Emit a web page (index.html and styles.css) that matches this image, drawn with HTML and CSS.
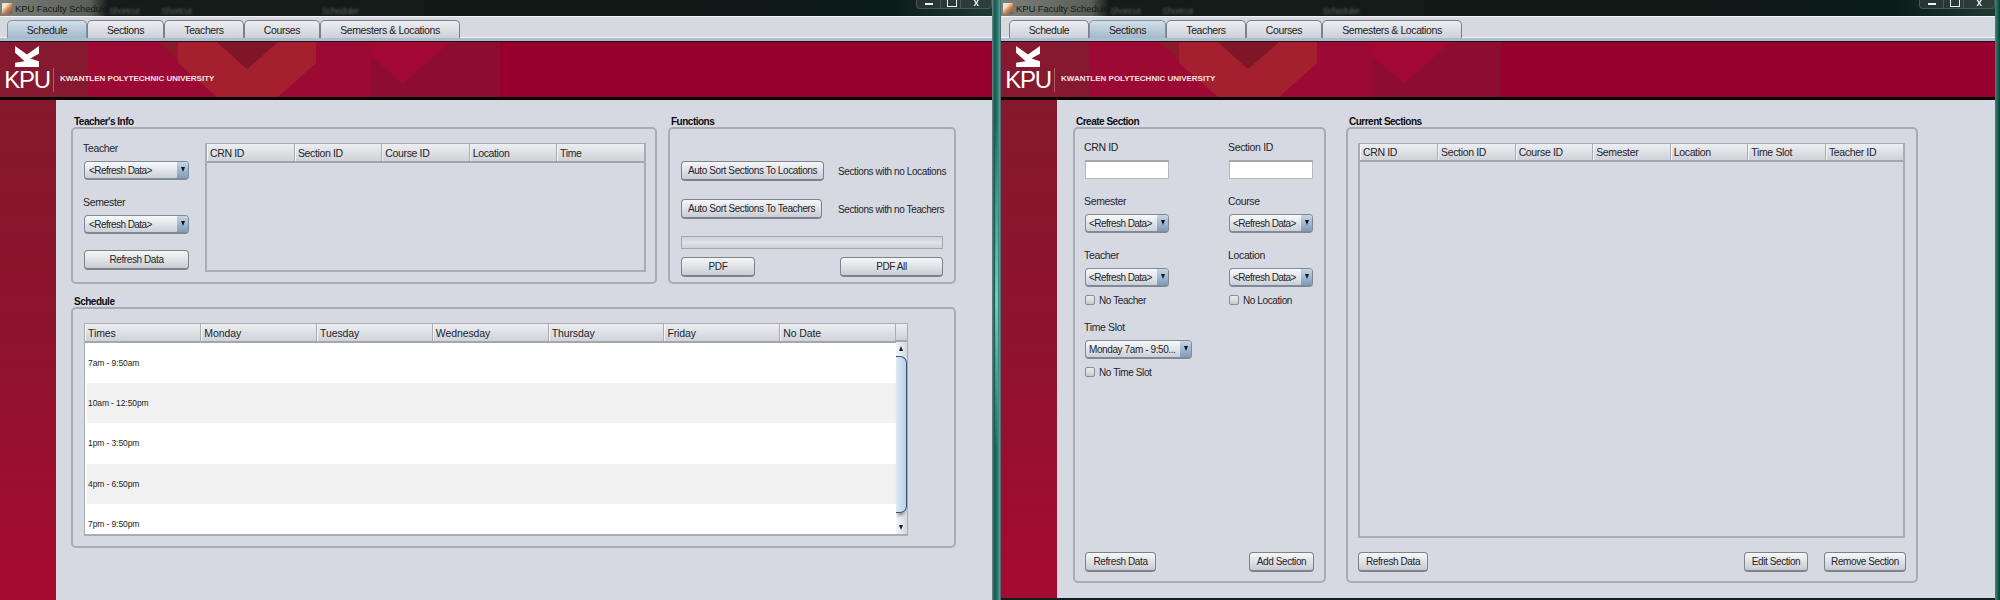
FILE: index.html
```html
<!DOCTYPE html>
<html lang="en">
<head>
    <meta charset="UTF-8">
    <meta name="viewport" content="width=device-width, initial-scale=1.0">
    <title>KPU Faculty Scheduler</title>
    <link rel="stylesheet" href="styles.css">
</head>
<body>
    <svg class="defs" width="0" height="0">
        <symbol id="banner-art" viewBox="0 0 520 55" preserveAspectRatio="xMinYMin meet">
            <rect x="0" y="0" width="88" height="55" fill="#86182f"/>
            <rect x="88" y="0" width="283" height="55" fill="#9c0a33"/>
            <polygon points="158,0 178,0 178,17" fill="#8a1a2c"/>
            <polygon points="178,0 217,0 247,27 278,0 316,0 316,21 278,55 217,55 178,21" fill="#a5202f"/>
            <polygon points="217,0 278,0 247,27" fill="#7f1628"/>
            <rect x="371" y="0" width="129" height="55" fill="#8c0d2e"/>
            <polygon points="371,0 450,0 403,42 371,14" fill="#a30832"/>
        </symbol>
        <symbol id="kpu-bird" viewBox="0 0 26 22">
            <polygon points="0,0 12.5,9 25,0 25,8 16,13 25,16 25,22 0,22 0,17.500 10,16 0,7"/>
        </symbol>
    </svg>

    <div class="desktop">
        <!-- schedule window -->
        <div class="window window-left">
            <div class="titlebar">
                <span class="app-icon"></span>
                <span class="app-title">KPU Faculty Scheduler</span>
                <span class="blur-label label-a">Shortcut</span>
                <span class="blur-label label-b">Shortcut</span>
                <span class="blur-label label-c">Scheduler</span>
                <div class="win-controls">
                    <span class="ctl-min"></span>
                    <span class="ctl-max"></span>
                    <span class="ctl-close">x</span>
                </div>
            </div>
            <div class="tabs">
                <div class="tab tab-w1 active">Schedule</div>
                <div class="tab tab-w2">Sections</div>
                <div class="tab tab-w3">Teachers</div>
                <div class="tab tab-w4">Courses</div>
                <div class="tab tab-w5">Semesters &amp; Locations</div>
            </div>
            <div class="banner">
                <svg class="banner-art"><use href="#banner-art"/></svg>
                <div class="logo">
                    <svg class="bird"><use href="#kpu-bird"/></svg>
                    <span class="logo-kpu">KPU</span>
                </div>
                <span class="logo-sep"></span>
                <span class="logo-name">KWANTLEN POLYTECHNIC UNIVERSITY</span>
            </div>
            <div class="main">
                <div class="sidebar"></div>
                <div class="content schedule-page">
                    <div class="top-row">
                        <section class="group info-group">
                            <h3>Teacher's Info</h3>
                            <div class="box info-box">
                                <div class="info-fields">
                                    <label>Teacher</label>
                                    <div class="combo">&lt;Refresh Data&gt;</div>
                                    <label class="next">Semester</label>
                                    <div class="combo">&lt;Refresh Data&gt;</div>
                                    <button class="btn refresh-wide">Refresh Data</button>
                                </div>
                                <div class="jtable info-table">
                                    <table>
                                        <thead>
                                            <tr><th>CRN ID</th><th>Section ID</th><th>Course ID</th><th>Location</th><th>Time</th></tr>
                                        </thead>
                                    </table>
                                </div>
                            </div>
                        </section>
                        <section class="group func-group">
                            <h3>Functions</h3>
                            <div class="box func-box">
                                <div class="func-row">
                                    <button class="btn sort-loc">Auto Sort Sections To Locations</button>
                                    <span class="func-note">Sections with no Locations</span>
                                </div>
                                <div class="func-row row-two">
                                    <button class="btn sort-tea">Auto Sort Sections To Teachers</button>
                                    <span class="func-note note-two">Sections with no Teachers</span>
                                </div>
                                <div class="progress"></div>
                                <div class="pdf-row">
                                    <button class="btn pdf-one">PDF</button>
                                    <button class="btn pdf-all">PDF All</button>
                                </div>
                            </div>
                        </section>
                    </div>
                    <section class="group sched-group">
                        <h3>Schedule</h3>
                        <div class="box sched-box">
                            <div class="sched-wrap">
                                <table class="sched-table">
                                    <thead>
                                        <tr><th>Times</th><th>Monday</th><th>Tuesday</th><th>Wednesday</th><th>Thursday</th><th>Friday</th><th>No Date</th></tr>
                                    </thead>
                                    <tbody>
                                        <tr><td>7am - 9:50am</td><td></td><td></td><td></td><td></td><td></td><td></td></tr>
                                        <tr class="alt"><td>10am - 12:50pm</td><td></td><td></td><td></td><td></td><td></td><td></td></tr>
                                        <tr><td>1pm - 3:50pm</td><td></td><td></td><td></td><td></td><td></td><td></td></tr>
                                        <tr class="alt"><td>4pm - 6:50pm</td><td></td><td></td><td></td><td></td><td></td><td></td></tr>
                                        <tr><td>7pm - 9:50pm</td><td></td><td></td><td></td><td></td><td></td><td></td></tr>
                                    </tbody>
                                </table>
                                <div class="scroll-col">
                                    <div class="scroll-corner"></div>
                                    <div class="scroll-track">
                                        <span class="arrow-up"></span>
                                        <span class="scroll-thumb"></span>
                                        <span class="arrow-down"></span>
                                    </div>
                                </div>
                            </div>
                        </div>
                    </section>
                </div>
            </div>
        </div>

        <div class="glass"></div>

        <!-- sections window -->
        <div class="window window-right">
            <div class="titlebar">
                <span class="app-icon"></span>
                <span class="app-title">KPU Faculty Scheduler</span>
                <span class="blur-label label-a">Shortcut</span>
                <span class="blur-label label-b">Shortcut</span>
                <span class="blur-label label-c">Scheduler</span>
                <div class="win-controls">
                    <span class="ctl-min"></span>
                    <span class="ctl-max"></span>
                    <span class="ctl-close">x</span>
                </div>
            </div>
            <div class="tabs">
                <div class="tab tab-w1">Schedule</div>
                <div class="tab tab-w2 active">Sections</div>
                <div class="tab tab-w3">Teachers</div>
                <div class="tab tab-w4">Courses</div>
                <div class="tab tab-w5">Semesters &amp; Locations</div>
            </div>
            <div class="banner">
                <svg class="banner-art"><use href="#banner-art"/></svg>
                <div class="logo">
                    <svg class="bird"><use href="#kpu-bird"/></svg>
                    <span class="logo-kpu">KPU</span>
                </div>
                <span class="logo-sep"></span>
                <span class="logo-name">KWANTLEN POLYTECHNIC UNIVERSITY</span>
            </div>
            <div class="main">
                <div class="sidebar"></div>
                <div class="content sections-page">
                    <section class="group create-group">
                        <h3>Create Section</h3>
                        <div class="box create-box">
                            <div class="form-grid">
                                <div class="field">
                                    <label>CRN ID</label>
                                    <input class="text-input" type="text">
                                </div>
                                <div class="field">
                                    <label>Section ID</label>
                                    <input class="text-input" type="text">
                                </div>
                                <div class="field">
                                    <label>Semester</label>
                                    <div class="combo combo-small">&lt;Refresh Data&gt;</div>
                                </div>
                                <div class="field">
                                    <label>Course</label>
                                    <div class="combo combo-small">&lt;Refresh Data&gt;</div>
                                </div>
                                <div class="field">
                                    <label>Teacher</label>
                                    <div class="combo combo-small">&lt;Refresh Data&gt;</div>
                                    <div class="check"><span class="check-box"></span>No Teacher</div>
                                </div>
                                <div class="field">
                                    <label>Location</label>
                                    <div class="combo combo-small">&lt;Refresh Data&gt;</div>
                                    <div class="check"><span class="check-box"></span>No Location</div>
                                </div>
                                <div class="field">
                                    <label>Time Slot</label>
                                    <div class="combo combo-time">Monday 7am - 9:50...</div>
                                    <div class="check"><span class="check-box"></span>No Time Slot</div>
                                </div>
                            </div>
                            <div class="button-row">
                                <button class="btn btn-refresh">Refresh Data</button>
                                <button class="btn btn-add">Add Section</button>
                            </div>
                        </div>
                    </section>
                    <section class="group current-group">
                        <h3>Current Sections</h3>
                        <div class="box current-box">
                            <div class="jtable current-table">
                                <table>
                                    <thead>
                                        <tr><th>CRN ID</th><th>Section ID</th><th>Course ID</th><th>Semester</th><th>Location</th><th>Time Slot</th><th>Teacher ID</th></tr>
                                    </thead>
                                </table>
                            </div>
                            <div class="button-row">
                                <button class="btn btn-refresh">Refresh Data</button>
                                <span class="spacer"></span>
                                <button class="btn btn-edit">Edit Section</button>
                                <button class="btn btn-remove">Remove Section</button>
                            </div>
                        </div>
                    </section>
                </div>
            </div>
        </div>
        <div class="glass-end"></div>
    </div>
</body>
</html>
```

FILE: styles.css
```css
* {
    box-sizing: border-box;
}

body {
    margin: 0;
    font-family: "Liberation Sans", Arial, sans-serif;
    font-size: 10px;
    letter-spacing: -0.4px;
    color: #23252b;
    overflow: hidden;
}

.defs {
    display: block;
    height: 0;
}

.desktop {
    display: flex;
    width: 2000px;
    height: 600px;
    background: #10201c;
}

.window {
    display: flex;
    flex-direction: column;
    height: 600px;
    flex: none;
}

.window-left {
    width: 992px;
    filter: blur(0.25px);
}

.window-right {
    width: 994px;
    height: 598px;
    filter: blur(0.7px);
}

.glass {
    width: 9px;
    flex: none;
    background:
        linear-gradient(180deg, transparent 20%, rgba(120, 245, 215, 0.75) 50%, transparent 75%) center / 3px 100% no-repeat,
        linear-gradient(90deg, #6f8285 0%, #145a4f 30%, #1f7a6a 60%, #6e8f96 85%, #3c5d5c 100%);
}

.glass-end {
    width: 5px;
    flex: none;
    background: linear-gradient(90deg, #2c8f7c, #0f3a34);
}

/* title bar */
.titlebar {
    position: relative;
    display: flex;
    align-items: center;
    height: 16px;
    flex: none;
    padding-left: 2px;
    background: linear-gradient(90deg, #7d8078 0, #5b5e58 90px, #141b18 108px, #121a18 70%, #0b1c1a 90%, #1f3a34 100%);
    color: #16181a;
    font-size: 9.5px;
}

.app-icon {
    width: 10px;
    height: 11px;
    flex: none;
    margin-right: 3px;
    background: linear-gradient(135deg, #e8e4dc 30%, #d8792f 60%, #3d5fa0);
}

.app-title {
    width: 92px;
    flex: none;
    white-space: nowrap;
    letter-spacing: -0.1px;
}

.blur-label {
    color: #58605c;
    font-size: 9px;
    filter: blur(1px);
    padding-top: 6px;
}

.label-a {
    margin-left: 2px;
}

.label-b {
    margin-left: 22px;
}

.label-c {
    margin-left: 130px;
}

.win-controls {
    position: absolute;
    right: 0;
    top: 0;
    display: flex;
    align-items: flex-start;
    height: 9px;
    border: 1px solid #4c5654;
    border-top: none;
    border-radius: 0 0 4px 4px;
    background: rgba(60, 70, 68, 0.5);
    color: #f2f2f2;
}

.win-controls span {
    display: block;
    height: 8px;
    border-right: 1px solid #4c5654;
}

.ctl-min {
    width: 24px;
    background: linear-gradient(#f2f2f2, #f2f2f2) center 3px / 8px 2px no-repeat;
}

.ctl-max {
    width: 20px;
    position: relative;
}

.ctl-max::after {
    content: "";
    position: absolute;
    left: 6px;
    top: -2px;
    width: 8px;
    height: 7px;
    border: 1px solid #f2f2f2;
}

.ctl-close {
    width: 30px;
    border-right: none !important;
    font-size: 10px;
    line-height: 5px;
    font-weight: bold;
    text-align: center;
}

/* tab strip */
.tabs {
    display: flex;
    align-items: flex-end;
    height: 25px;
    flex: none;
    padding: 4px 0 0 7px;
    background: #d6d9e0;
    border-top: 1px solid #f2f3f5;
    border-bottom: 3px solid #a9c0d2;
    box-shadow: inset 0 -1px 0 #eef2f5;
}

.window-right .tabs {
    padding-left: 8px;
}

.tab {
    display: flex;
    align-items: center;
    justify-content: center;
    height: 18px;
    border: 1px solid #7b8088;
    border-bottom: none;
    border-radius: 5px 5px 0 0;
    background: linear-gradient(#eceef1, #cdd0d7);
    font-size: 10.5px;
    color: #1e2026;
}

.tab.active {
    background: linear-gradient(#d3dee8, #a3bacd);
    border-color: #7d95a8;
}

.tab-w1 { width: 80px; }
.tab-w2 { width: 77px; }
.tab-w3 { width: 80px; }
.tab-w4 { width: 76px; }
.tab-w5 { width: 140px; }

/* banner */
.banner {
    position: relative;
    display: flex;
    align-items: center;
    height: 59px;
    flex: none;
    background: #97002e;
    border-top: 1px solid #2c0a12;
    border-bottom: 3px solid #050204;
    color: #fff;
    overflow: hidden;
}

.banner-art {
    position: absolute;
    left: 0;
    top: 0;
    width: 520px;
    height: 55px;
}

.logo {
    position: relative;
    display: flex;
    flex-direction: column;
    align-items: center;
    width: 53px;
    flex: none;
    padding-left: 1px;
    margin-top: -3px;
}

.bird {
    width: 25px;
    height: 21px;
    fill: #fff;
}

.logo-kpu {
    font-size: 24px;
    line-height: 20px;
    letter-spacing: -1.3px;
    margin-top: 3px;
}

.logo-sep {
    position: relative;
    width: 1px;
    height: 24px;
    flex: none;
    margin-top: 20px;
    background: rgba(255, 255, 255, 0.3);
}

.logo-name {
    position: relative;
    margin: 18px 0 0 6px;
    font-size: 8px;
    font-weight: bold;
    letter-spacing: 0;
    white-space: nowrap;
    color: #f3e4e6;
}

/* page body */
.main {
    display: flex;
    flex: 1;
    min-height: 0;
}

.sidebar {
    width: 56px;
    flex: none;
    background: linear-gradient(#85182d 0%, #8f122e 50%, #a60a30 100%);
}

.content {
    flex: 1;
    background: #d6d9e1;
    padding-top: 13px;
}

.schedule-page {
    padding-left: 15px;
}

.sections-page {
    display: flex;
    gap: 20px;
    padding-left: 16px;
}

.group h3 {
    height: 14px;
    margin: 0;
    padding: 2px 0 0 3px;
    font-size: 10px;
    line-height: 14px;
    font-weight: bold;
    letter-spacing: -0.5px;
    color: #0c0d10;
}

.box {
    border: 2px solid #a9acb3;
    border-radius: 5px;
}

.top-row {
    display: flex;
    gap: 11px;
}

label {
    display: block;
    height: 14px;
    line-height: 13px;
    font-size: 10.5px;
    letter-spacing: -0.35px;
}

/* teacher's info */
.info-group {
    width: 586px;
}

.info-box {
    display: flex;
    gap: 16px;
    height: 157px;
    padding: 13px 0 0 11px;
}

.info-fields {
    width: 105px;
    flex: none;
}

.info-fields label {
    margin-bottom: 5px;
    margin-left: -1px;
}

.info-fields .next {
    margin-top: 16px;
}

.refresh-wide {
    width: 105px;
    margin-top: 16px;
}

.combo {
    position: relative;
    display: flex;
    align-items: center;
    width: 105px;
    height: 19px;
    padding-left: 4px;
    border: 1px solid #7f8a99;
    border-bottom-width: 2px;
    border-radius: 4px;
    background: linear-gradient(#f8f9fa, #ccd0d7);
    font-size: 10px;
    letter-spacing: -0.55px;
    white-space: nowrap;
    overflow: hidden;
}

.combo::after {
    content: "";
    position: absolute;
    right: 0;
    top: 0;
    bottom: 0;
    width: 11px;
    background: linear-gradient(#c6d5e3, #7f9dbb);
}

.combo::before {
    content: "";
    position: absolute;
    z-index: 1;
    right: 3px;
    top: 5px;
    border-left: 2.5px solid transparent;
    border-right: 2.5px solid transparent;
    border-top: 5px solid #15171b;
}

.btn {
    display: block;
    height: 20px;
    padding: 0;
    border: 1px solid #7d838c;
    border-bottom-width: 2px;
    border-radius: 4px;
    background: linear-gradient(#f6f7f8, #c9ccd3);
    font-family: inherit;
    font-size: 10px;
    letter-spacing: -0.4px;
    color: #23252b;
    text-align: center;
    white-space: nowrap;
}

/* tables */
.jtable {
    border: 2px solid #a9acb3;
    border-top-width: 1px;
}

.jtable table,
.sched-table {
    width: 100%;
    table-layout: fixed;
    border-collapse: collapse;
}

th {
    height: 18px;
    padding: 0 0 0 3px;
    background: linear-gradient(#eceef1, #cfd2d9);
    border-right: 1px solid #a9acb3;
    border-bottom: 2px solid #a3a6ad;
    box-shadow: inset 1px 0 0 #f4f5f7;
    font-size: 10.5px;
    font-weight: normal;
    letter-spacing: -0.35px;
    text-align: left;
    color: #23252b;
}

th:last-child {
    border-right: none;
}

.info-table {
    width: 441px;
    height: 129px;
    margin-top: 1px;
}

/* functions */
.func-group {
    width: 288px;
}

.func-box {
    height: 157px;
    padding: 32px 0 0 11px;
}

.func-row {
    display: flex;
    align-items: center;
    gap: 14px;
}

.row-two {
    gap: 16px;
    margin-top: 18px;
}

.sort-loc {
    width: 143px;
}

.sort-tea {
    width: 141px;
}

.progress {
    width: 262px;
    height: 13px;
    margin-top: 17px;
    border: 1px solid #a4a7ae;
    background: linear-gradient(#cdd0d6, #e0e2e7 50%, #cdd0d6);
}

.pdf-row {
    display: flex;
    justify-content: space-between;
    width: 262px;
    margin-top: 8px;
}

.pdf-one {
    width: 74px;
}

.pdf-all {
    width: 103px;
}

/* schedule */
.sched-group {
    width: 885px;
    margin-top: 9px;
}

.sched-box {
    height: 241px;
    padding: 14px 0 0 11px;
}

.sched-wrap {
    display: flex;
    width: 824px;
    height: 213px;
    border: 1px solid #a9acb3;
    border-width: 1px 1px 2px 1px;
    background: #fff;
    overflow: hidden;
}

.sched-table {
    width: 811px;
    flex: none;
    align-self: flex-start;
}

.sched-table th {
    letter-spacing: -0.1px;
}

.sched-table th:last-child {
    border-right: 1px solid #a9acb3;
}

.sched-table td {
    height: 40.500px;
    padding: 0 0 0 3px;
    font-size: 8.5px;
    letter-spacing: -0.1px;
    color: #1c1d20;
}

.alt td {
    background: #f1f1f2;
}

.alt td:first-child {
    box-shadow: inset 2px 0 0 #fff;
}

.scroll-col {
    display: flex;
    flex-direction: column;
    flex: 1;
}

.scroll-corner {
    height: 18px;
    flex: none;
    background: linear-gradient(#eceef1, #cfd2d9);
    border-bottom: 2px solid #a3a6ad;
}

.scroll-track {
    position: relative;
    flex: 1;
    background: linear-gradient(90deg, #f3f4f6, #d6d9e0);
}

.scroll-thumb {
    position: absolute;
    left: 0;
    right: 0;
    top: 14px;
    height: 157px;
    background: linear-gradient(90deg, #dfe9f2, #b8d2e9);
    border: 1px solid #34506e;
    border-left: none;
    border-radius: 0 7px 7px 0;
    box-shadow: 0 5px 3px -2px #9a9ca1;
}

.arrow-up,
.arrow-down {
    position: absolute;
    left: 3px;
    border-left: 2.5px solid transparent;
    border-right: 2.5px solid transparent;
}

.arrow-up {
    top: 4px;
    border-bottom: 5px solid #1d1f23;
}

.arrow-down {
    bottom: 4px;
    border-top: 5px solid #1d1f23;
}

/* create section */
.create-group {
    width: 253px;
}

.create-box,
.current-box {
    display: flex;
    flex-direction: column;
    height: 456px;
    padding: 12px 10px 9px 10px;
}

.form-grid {
    display: grid;
    grid-template-columns: 144px 85px;
    row-gap: 16px;
}

.field label {
    margin-bottom: 5px;
    margin-left: -1px;
}

.text-input {
    display: block;
    width: 84px;
    height: 19px;
    border: 1px solid #b5b8bf;
    border-top: 2px solid #a4a7ae;
    background: #fff;
}

.combo-small {
    width: 84px;
    padding-left: 3px;
}

.combo-time {
    width: 107px;
    padding-left: 3px;
    letter-spacing: -0.4px;
}

.check {
    display: flex;
    align-items: center;
    gap: 4px;
    height: 10px;
    margin-top: 8px;
}

.check-box {
    width: 10px;
    height: 10px;
    border: 1px solid #878d96;
    border-radius: 2px;
    background: linear-gradient(#eceef1, #c6cad1);
}

.button-row {
    display: flex;
    justify-content: space-between;
    margin-top: auto;
}

.create-box .btn-refresh {
    width: 71px;
}

.btn-add {
    width: 65px;
}

/* current sections */
.current-group {
    width: 572px;
}

.current-box {
    padding-top: 14px;
}

.current-table {
    width: 547px;
    height: 395px;
}

.current-table th {
    height: 17px;
}

.current-box .button-row {
    gap: 16px;
}

.current-box .btn-refresh {
    width: 70px;
}

.spacer {
    flex: 1;
}

.btn-edit {
    width: 64px;
}

.btn-remove {
    width: 82px;
}
```
